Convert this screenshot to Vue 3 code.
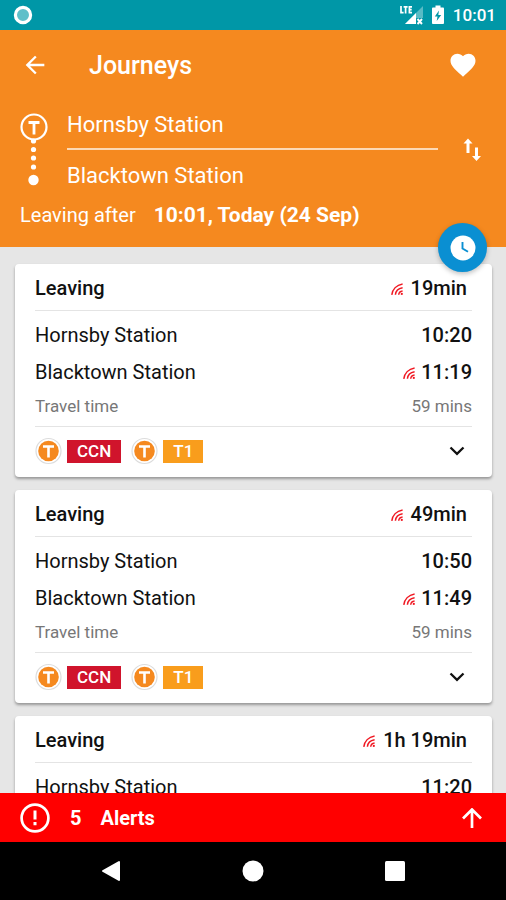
<script setup>
import { ref } from 'vue'

const journeys = ref([
  { id: 1, leaving: '19min', from: 'Hornsby Station', departs: '10:20', to: 'Blacktown Station', arrives: '11:19', duration: '59 mins' },
  { id: 2, leaving: '49min', from: 'Hornsby Station', departs: '10:50', to: 'Blacktown Station', arrives: '11:49', duration: '59 mins' },
  { id: 3, leaving: '1h 19min', from: 'Hornsby Station', departs: '11:20', to: 'Blacktown Station', arrives: '12:19', duration: '59 mins' },
])

const lines = [
  { name: 'CCN', tone: 'red' },
  { name: 'T1', tone: 'amber' },
]

const origin = ref('Hornsby Station')
const destination = ref('Blacktown Station')

function swap() {
  const first = origin.value
  origin.value = destination.value
  destination.value = first
}
</script>

<template>
  <div class="screen">
    <div class="status">
      <svg class="record" viewBox="0 0 20 20" aria-hidden="true">
        <circle cx="10" cy="10" r="7.6" fill="#5fbfc9" stroke="#fff" stroke-width="3.2" />
      </svg>
      <div class="status-right">
        <svg class="signal" viewBox="0 0 24 20" aria-hidden="true">
          <path d="M24 1v12h-7v6H6z" fill="#fff" opacity=".35" />
          <path d="M17 8V19H6z" fill="#fff" />
          <path d="M18.500 14l4.500 5M23 14l-4.500 5" stroke="#fff" stroke-width="1.900" />
          <path d="M2 1v6.600H4.600M4.600 1.900h4M6.600 1.900v6.500M13 1.900h-2.600v5.700h2.600M10.400 4.700h2.300" fill="none" stroke="#fff" stroke-width="1.700" />
        </svg>
        <svg class="battery" viewBox="0 0 14 20" aria-hidden="true">
          <path d="M4.500 0.500h5v2h2.300c.8 0 1.200.5 1.200 1.200v14.100c0 .8-.4 1.200-1.200 1.200H2.200c-.8 0-1.200-.4-1.200-1.200V3.700c0-.7.4-1.200 1.200-1.200h2.300z" fill="#fff" />
          <path d="M8 5.500l-4.200 6h2.700l-.8 4.500 4.500-6H7.300z" fill="#0097a7" />
        </svg>
        <span class="clock">10:01</span>
      </div>
    </div>

    <header class="header">
      <div class="appbar">
        <button class="icon-btn" type="button" aria-label="Back">
          <svg width="28" height="28" viewBox="0 0 24 24" aria-hidden="true">
            <path d="M20 11H7.830l5.590-5.590L12 4l-8 8 8 8 1.410-1.410L7.830 13H20z" fill="#fff" />
          </svg>
        </button>
        <h1 class="title">Journeys</h1>
        <button class="icon-btn" type="button" aria-label="Favourite">
          <svg width="30" height="30" viewBox="0 0 24 24" aria-hidden="true">
            <path d="M12 21.350l-1.450-1.320C5.400 15.360 2 12.280 2 8.500 2 5.420 4.420 3 7.500 3c1.740 0 3.410.81 4.500 2.090C13.090 3.810 14.760 3 16.500 3 19.580 3 22 5.420 22 8.500c0 3.780-3.400 6.860-8.550 11.540z" fill="#fff" />
          </svg>
        </button>
      </div>

      <div class="route">
        <svg class="track" width="28" height="76" viewBox="0 0 28 76" aria-hidden="true">
          <circle cx="14" cy="14" r="12.500" fill="none" stroke="#fff" stroke-width="2.200" />
          <path d="M8.500 9.500h11M14 9.500v12" stroke="#fff" stroke-width="2.800" />
          <circle cx="13.500" cy="28" r="2.600" fill="#fff" />
          <circle cx="13.500" cy="36.500" r="2.600" fill="#fff" />
          <circle cx="13.500" cy="45" r="2.600" fill="#fff" />
          <circle cx="13.500" cy="54" r="2.600" fill="#fff" />
          <circle cx="13.500" cy="67" r="5.200" fill="#fff" />
        </svg>
        <div class="stations">
          <button class="station" type="button">{{ origin }}</button>
          <button class="station" type="button">{{ destination }}</button>
        </div>
        <button class="icon-btn swap" type="button" aria-label="Swap stations" @click="swap">
          <svg width="28" height="28" viewBox="0 0 28 28" aria-hidden="true">
            <path d="M10 2.500L14.500 7.500h-3V17h-3V7.500h-3zM17 11.500h3V20h3l-4.500 5-4.500-5h3z" fill="#fff" />
          </svg>
        </button>
      </div>

      <button class="when" type="button">
        <span>Leaving after</span>
        <strong>10:01, Today (24 Sep)</strong>
      </button>

      <button class="fab" type="button" aria-label="Change time">
        <svg width="26" height="26" viewBox="0 0 26 26" aria-hidden="true">
          <circle cx="13" cy="13" r="12.500" fill="#fff" />
          <path d="M12.500 7v6.500l5.500 3.300" fill="none" stroke="#0a8fd2" stroke-width="1.900" />
        </svg>
      </button>
    </header>

    <main class="list">
      <article v-for="j in journeys" :key="j.id" class="card">
        <div class="card-head">
          <h2>Leaving</h2>
          <span class="live">
            <svg class="wave" viewBox="0 0 12 12" aria-hidden="true">
              <path d="M.8 11.800C1.500 6.500 5.500 2 11.600 1M4.400 11.800c.3-3.600 3-6.500 7.200-7.100M7.700 11.800c.2-2 1.600-3.400 3.900-3.700" />
              <circle cx="10.800" cy="10.900" r="1.100" />
            </svg>
            {{ j.leaving }}
          </span>
        </div>
        <div class="card-body">
          <div class="row">
            <span>{{ j.from }}</span>
            <span class="time">{{ j.departs }}</span>
          </div>
          <div class="row">
            <span>{{ j.to }}</span>
            <span class="time">
              <svg class="wave" viewBox="0 0 12 12" aria-hidden="true">
                <path d="M.8 11.800C1.500 6.500 5.500 2 11.600 1M4.400 11.800c.3-3.600 3-6.500 7.200-7.100M7.700 11.800c.2-2 1.600-3.400 3.900-3.700" />
                <circle cx="10.800" cy="10.900" r="1.100" />
              </svg>
              {{ j.arrives }}
            </span>
          </div>
          <div class="row travel">
            <span>Travel time</span>
            <span>{{ j.duration }}</span>
          </div>
        </div>
        <div class="card-foot">
          <div v-for="line in lines" :key="line.name" class="leg">
            <svg width="28" height="28" viewBox="0 0 28 28" aria-hidden="true">
              <circle cx="13.500" cy="14" r="12.500" fill="#fff" stroke="#dcdcdc" stroke-width="1.200" />
              <circle cx="13.500" cy="14" r="10.300" fill="#f5891f" />
              <path d="M8 9.500h11M13.500 9.500v11" stroke="#fff" stroke-width="2.600" />
            </svg>
            <span class="badge" :class="line.tone">{{ line.name }}</span>
          </div>
          <button class="icon-btn expand" type="button" aria-label="Show details">
            <svg width="16" height="10" viewBox="0 0 16 10" aria-hidden="true">
              <path d="M1.500 1.500L8 7.800l6.500-6.300" fill="none" stroke="#111" stroke-width="2.300" />
            </svg>
          </button>
        </div>
      </article>
    </main>

    <button class="alerts" type="button">
      <svg width="30" height="30" viewBox="0 0 30 30" aria-hidden="true">
        <circle cx="15" cy="15" r="13.400" fill="none" stroke="#fff" stroke-width="2.700" />
        <path d="M15 7.500v9M15 19v3.200" stroke="#fff" stroke-width="3" />
      </svg>
      <span class="count">5</span>
      <span>Alerts</span>
      <svg class="up" width="20" height="20" viewBox="0 0 20 20" aria-hidden="true">
        <path d="M10 20V2M1 10.500L10 1.500l9 9" fill="none" stroke="#fff" stroke-width="2.700" />
      </svg>
    </button>

    <nav class="nav">
      <button class="icon-btn" type="button" aria-label="System back">
        <svg width="20" height="22" viewBox="0 0 20 22" aria-hidden="true">
          <path d="M18 2v18L2 11z" fill="#fff" stroke="#fff" stroke-width="2" stroke-linejoin="round" />
        </svg>
      </button>
      <button class="icon-btn" type="button" aria-label="Home">
        <svg width="22" height="22" viewBox="0 0 22 22" aria-hidden="true">
          <circle cx="11" cy="11" r="10.500" fill="#fff" />
        </svg>
      </button>
      <button class="icon-btn" type="button" aria-label="Recent apps">
        <svg width="20" height="20" viewBox="0 0 20 20" aria-hidden="true">
          <rect width="20" height="20" rx="1.500" fill="#fff" />
        </svg>
      </button>
    </nav>
  </div>
</template>

<style>
body {
  margin: 0;
}
</style>

<style scoped>
.screen {
  display: flex;
  flex-direction: column;
  height: 100vh;
  overflow: hidden;
  background: #e6e6e6;
  color: #111;
  font-family: Roboto, "Liberation Sans", sans-serif;
  font-size: 20px;
}

button {
  margin: 0;
  padding: 0;
  border: 0;
  background: none;
  color: inherit;
  font: inherit;
  text-align: left;
  cursor: pointer;
}

svg {
  display: block;
  flex: none;
}

.icon-btn {
  display: flex;
  align-items: center;
  justify-content: center;
}

.status {
  display: flex;
  flex: none;
  align-items: center;
  justify-content: space-between;
  height: 30px;
  padding: 0 10px 0 13px;
  background: #0097a7;
  color: #fff;
}

.record {
  width: 20px;
  height: 20px;
}

.status-right {
  display: flex;
  align-items: center;
}

.signal {
  width: 24px;
  height: 20px;
}

.battery {
  width: 14px;
  height: 20px;
  margin-left: 8px;
}

.clock {
  margin-left: 8px;
  font-size: 17px;
  font-weight: 500;
}

.header {
  position: relative;
  z-index: 1;
  flex: none;
  height: 217px;
  background: #f5891f;
  color: #fff;
}

.appbar {
  display: flex;
  align-items: center;
  height: 70px;
  padding: 0 28px 0 21px;
}

.title {
  flex: 1;
  margin: 0 0 0 40px;
  font-size: 25px;
  font-weight: 500;
}

.route {
  display: flex;
  height: 100px;
  padding: 0 20px;
}

.track {
  margin-top: 13px;
}

.stations {
  display: flex;
  flex: 1;
  flex-direction: column;
  margin-left: 19px;
}

.station {
  height: 50px;
  font-size: 22px;
}

.station:first-child {
  border-bottom: 2px solid #fcd9b5;
}

.swap {
  width: 28px;
  margin-left: 20px;
}

.when {
  display: flex;
  align-items: baseline;
  gap: 18px;
  padding: 3px 20px;
}

.when strong {
  font-size: 21px;
  font-weight: 700;
}

.fab {
  position: absolute;
  right: 19px;
  bottom: -25px;
  display: flex;
  align-items: center;
  justify-content: center;
  width: 49px;
  height: 49px;
  border-radius: 50%;
  background: #0a8fd2;
  box-shadow: 0 2px 5px rgba(0, 0, 0, 0.25);
}

.list {
  display: flex;
  flex: 1;
  flex-direction: column;
  gap: 13px;
  min-height: 0;
  padding: 17px 14px 17px 15px;
  overflow-y: auto;
  scrollbar-width: none;
}

.card {
  flex: none;
  padding: 0 20px;
  border-radius: 4px;
  background: #fff;
  box-shadow: 0 2px 3px rgba(0, 0, 0, 0.35);
}

.card-head {
  display: flex;
  align-items: center;
  justify-content: space-between;
  height: 47px;
  padding: 2px 5px 0 0;
  border-bottom: 1px solid #e4e4e4;
  box-sizing: border-box;
  font-weight: 500;
}

.card-head h2 {
  margin: 0;
  font-size: 20px;
  font-weight: 500;
}

.live,
.time {
  display: flex;
  align-items: center;
  gap: 8px;
  font-weight: 500;
}

.time {
  gap: 6px;
}

.wave {
  width: 12px;
  height: 12px;
  margin-top: 2px;
  fill: none;
  stroke: #f01822;
  stroke-width: 1.5;
}

.wave circle {
  fill: #f01822;
  stroke: none;
}

.card-body {
  padding: 5px 0;
  border-bottom: 1px solid #e4e4e4;
}

.row {
  display: flex;
  align-items: center;
  justify-content: space-between;
  height: 37px;
}

.travel {
  height: 31px;
  color: #777;
  font-size: 17px;
}

.card-foot {
  display: flex;
  align-items: center;
  gap: 10px;
  height: 48px;
  padding-bottom: 2px;
}

.leg {
  display: flex;
  align-items: center;
  gap: 4px;
}

.badge {
  padding: 0 10px;
  color: #fff;
  font-size: 17px;
  font-weight: 500;
  line-height: 23px;
}

.red {
  background: #d0142c;
}

.amber {
  background: #f99d1c;
}

.expand {
  width: 30px;
  height: 30px;
  margin-left: auto;
}

.alerts {
  display: flex;
  flex: none;
  align-items: center;
  height: 49px;
  padding: 0 24px 0 20px;
  background: #f00;
  color: #fff;
  font-weight: 700;
}

.count {
  margin: 0 19px 0 20px;
}

.up {
  margin-left: auto;
}

.nav {
  display: grid;
  flex: none;
  grid-template-columns: repeat(3, 1fr);
  height: 58px;
  padding: 0 40px;
  background: #000;
}
</style>
